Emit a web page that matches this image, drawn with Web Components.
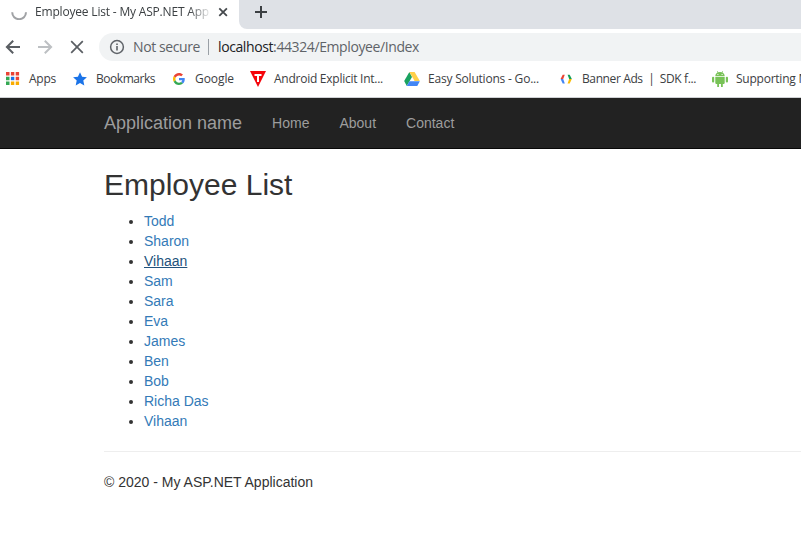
<!DOCTYPE html>
<html lang="en">
<head>
<meta charset="utf-8">
<title>Employee List - My ASP.NET Application</title>
<style>
html,body{margin:0;height:100%;overflow:hidden;background:#fff}
body{display:flex;flex-direction:column}
</style>
</head>
<body>
<browser-chrome></browser-chrome>
<site-navbar></site-navbar>
<employee-page></employee-page>
<script>
const define = (name, html, setup) => customElements.define(name, class extends HTMLElement {
  connectedCallback() {
    if (this.shadowRoot) return;
    const t = document.createElement('template');
    t.innerHTML = html;
    this.attachShadow({mode: 'open'}).append(t.content.cloneNode(true));
    if (setup) setup(this, this.shadowRoot);
  }
});

// Label whose letter spacing is adjusted so the text spans the "span" attribute in pixels.
define('fit-label', `<style>:host{display:block;flex:none;white-space:pre}span{display:inline-block}</style><span><slot></slot></span>`, (el, root) => {
  const s = root.querySelector('span');
  const want = +el.getAttribute('span');
  if (want) {
    const n = el.textContent.length;
    s.style.letterSpacing = (want - s.getBoundingClientRect().width) / n + 'px';
    el.style.width = want + 'px';
  }
});

define('bookmark-item', `<style>
:host{display:flex;flex:none;align-items:center;height:24px}
.icon{display:flex;align-items:center;justify-content:center;width:16px;height:16px;margin-right:var(--gap,8px)}
</style><span class="icon"><slot name="icon"></slot></span><slot></slot>`);

define('tab-strip', `<style>
:host{display:flex;height:29px;background:#fff;font:12px/16px "Open Sans","Noto Sans",sans-serif;color:#3c4043}
.tab{display:flex;width:239px;flex:none;box-sizing:border-box;padding:4px 0 9px 11px}
.title{width:174px;margin-left:8px;overflow:hidden;-webkit-mask-image:linear-gradient(90deg,#000 154px,transparent 177px);mask-image:linear-gradient(90deg,#000 154px,transparent 177px)}
.close{margin-left:7px}
svg{display:block;flex:none}
.rest{flex:1;background:#dee1e6;border-bottom-left-radius:8px;padding:4px 0 0 14px}
</style>
<div class="tab">
<svg width="16" height="16" viewBox="0 0 16 16"><path d="M1.2 8.300A6.900 6.900 0 0 0 15 8.300" fill="none" stroke="#a0a2a5" stroke-width="2"/></svg>
<div class="title"><fit-label span="174">Employee List - My ASP.NET App</fit-label></div>
<svg class="close" width="16" height="16" viewBox="0 0 16 16"><path d="M3.300 4.300l7.600 7.600M10.900 4.300l-7.600 7.600" stroke="#45494d" stroke-width="1.800"/></svg>
</div>
<div class="rest"><svg width="16" height="16" viewBox="0 0 16 16"><path d="M2 8h12M8 2v12" stroke="#3c4043" stroke-width="2"/></svg></div>`);

define('address-bar', `<style>
:host{display:flex;align-items:center;height:36px;font:14px/20px "Open Sans","Noto Sans",sans-serif;color:#5f6368}
svg{display:block;flex:none}
.nav{display:flex;width:99px;flex:none;gap:16px;padding-left:5px;box-sizing:border-box}
.pill{flex:1;height:28px;display:flex;align-items:center;background:#f1f3f4;border-radius:14px 0 0 14px;padding-left:10px}
.sep{width:1px;height:16px;background:#9aa0a6;margin:0 9px 0 8px;flex:none}
.host{color:#202124}
</style>
<div class="nav">
<svg width="16" height="16" viewBox="0 0 16 16"><path d="M15 8H2M8.200 1.700L1.900 8l6.300 6.300" fill="none" stroke="#5a5e63" stroke-width="2"/></svg>
<svg width="16" height="16" viewBox="0 0 16 16"><path d="M1 8h13M7.800 1.700L14.100 8l-6.300 6.300" fill="none" stroke="#bdc0c3" stroke-width="2"/></svg>
<svg width="16" height="16" viewBox="0 0 16 16"><path d="M2.200 2.200l11.600 11.600M13.800 2.200L2.200 13.800" stroke="#5a5e63" stroke-width="1.700"/></svg>
</div>
<div class="pill">
<svg width="16" height="16" viewBox="0 0 16 16"><circle cx="8" cy="8" r="6.400" fill="none" stroke="#5f6368" stroke-width="1.500"/><path d="M8 7v4.600M8 4.400v1.700" stroke="#5f6368" stroke-width="1.600"/></svg>
<fit-label span="67" style="margin-left:8px">Not secure</fit-label><span class="sep"></span>
<fit-label span="201"><span class="host">localhost</span>:44324/Employee/Index</fit-label>
</div>`);

define('bookmarks-bar', `<style>
:host{display:flex;align-items:center;box-sizing:border-box;height:33px;padding:0 0 4px 4px;border-bottom:1px solid #cfd1d4;overflow:hidden;font:12px/16px "Open Sans","Noto Sans",sans-serif;color:#3c4043}
svg{display:block}
</style>
<bookmark-item style="--gap:9px"><svg slot="icon" width="16" height="16" viewBox="0 0 16 16"><path fill="#ea4335" d="M2 1h3.500v3.500H2zM6.900 1h3.400v3.500H6.900zM11.700 1h3.400v3.500h-3.400z"/><path fill="#34a853" d="M2 5.800h3.500v3.400H2zM2 10.600h3.500V14H2z"/><path fill="#1a73e8" d="M6.900 5.800h3.400v3.400H6.900z"/><path fill="#ea4335" d="M11.700 5.800h3.400v3.400h-3.400z"/><path fill="#f9ab00" d="M6.900 10.600h3.400V14H6.900zM11.700 10.600h3.400V14h-3.400z"/></svg><fit-label span="27">Apps</fit-label></bookmark-item>
<bookmark-item style="margin-left:16px"><svg slot="icon" width="16" height="16" viewBox="0 0 16 16"><path fill="#1a73e8" d="M8 1.200l2.100 4.500 4.800.5-3.600 3.300 1 5L8 12.100l-4.300 2.400 1-5L1.100 6.200l4.800-.5z"/></svg><fit-label span="59">Bookmarks</fit-label></bookmark-item>
<bookmark-item style="margin-left:16px"><svg slot="icon" width="12" height="12" viewBox="0 0 48 48"><path fill="#ea4335" d="M24 9.500c3.500 0 6.600 1.200 9.100 3.600l6.800-6.800C35.900 2.400 30.500 0 24 0 14.600 0 6.500 5.400 2.600 13.200l7.900 6.200C12.400 13.700 17.700 9.500 24 9.500z"/><path fill="#4285f4" d="M47 24.500c0-1.600-.2-3.100-.4-4.500H24v9h13c-.6 3-2.300 5.500-4.800 7.200l7.700 6C44.400 38 47 32 47 24.500z"/><path fill="#fbbc05" d="M10.500 28.600a14 14 0 0 1 0-9.200l-7.900-6.200a24 24 0 0 0 0 21.600z"/><path fill="#34a853" d="M24 48c6.500 0 11.900-2.100 15.900-5.800l-7.700-6c-2.200 1.500-4.900 2.300-8.200 2.300-6.300 0-11.600-4.200-13.500-9.900l-7.900 6.200C6.500 42.600 14.600 48 24 48z"/></svg><fit-label span="39">Google</fit-label></bookmark-item>
<bookmark-item style="margin-left:16px"><svg slot="icon" width="16" height="16" viewBox="0 0 16 16"><path fill="#f5050b" d="M0 0h16L8 16z"/><path fill="#fff" d="M4.500 3h7v2H9v6H7V5H4.500z"/></svg><fit-label span="109">Android Explicit Int...</fit-label></bookmark-item>
<bookmark-item style="margin-left:21px"><svg slot="icon" width="16" height="14" viewBox="0 0 87.300 78"><path fill="#1aa260" d="M29 0L0 50.500 14.500 78l29.200-50.500z"/><path fill="#ffcf48" d="M29 0h29.300l29 50.500H58z"/><path fill="#4285f4" d="M29.200 52h58.100L73 78H14.500z"/></svg><fit-label span="111">Easy Solutions - Go...</fit-label></bookmark-item>
<bookmark-item style="margin-left:19px"><svg slot="icon" width="16" height="16" viewBox="0 0 16 16"><path fill="#ea4335" d="M4.700 3.700h2.100L5.200 8H2.600z"/><path fill="#4285f4" d="M2.600 8h2.600l1.600 4.400H4.700z"/><path fill="#109d58" d="M9.600 3.700h2.100L13.800 8h-2.600z"/><path fill="#fbbc05" d="M11.200 8h2.600l-2.100 4.400H9.600z"/></svg><fit-label span="114">Banner Ads  |  SDK f...</fit-label></bookmark-item>
<bookmark-item style="margin-left:16px"><svg slot="icon" width="16" height="16" viewBox="0 0 16 16" fill="#78c257"><path d="M3.300 5.200C3.400 3 4.600 2 5.600 1.500L4.900.4l.5-.3.8 1.100a6 6 0 0 1 3.600 0l.8-1.100.5.3-.7 1.100c1 .5 2.200 1.500 2.300 3.700z"/><path d="M3.300 5.900h9.400v6.200q0 .8-.8.8h-1.100v3.100H9v-3.100H7V16H5.200v-3.100H4.100q-.8 0-.8-.8z"/><rect y="5.800" width="2.200" height="5.600" rx="1"/><rect x="13.800" y="5.800" width="2.200" height="5.600" rx="1"/><path fill="#fff" d="M5.400 3h1v1h-1zM9.600 3h1v1h-1z"/></svg><fit-label span="73">Supporting M</fit-label></bookmark-item>`);

define('browser-chrome', `<style>:host{display:flex;flex-direction:column;height:98px;flex:none}</style>
<tab-strip></tab-strip><address-bar></address-bar><bookmarks-bar></bookmarks-bar>`);

define('site-navbar', `<style>
:host{display:flex;flex:none;height:50px;background:#222;border-bottom:1px solid #080808;font:14px/20px "Liberation Sans",Arial,sans-serif;padding-left:89px}
a{padding:15px;color:#9d9d9d}
.brand{font-size:18px}
</style><a class="brand">Application name</a><a>Home</a><a>About</a><a>Contact</a>`);

define('employee-list', `<style>
:host{display:block}ul{margin:0 0 10px;padding-left:40px}a{color:#337ab7}
a.hover{color:#23527c;text-decoration:underline}
</style><ul></ul>`, (el, root) => {
  const ul = root.querySelector('ul');
  ['Todd','Sharon','Vihaan','Sam','Sara','Eva','James','Ben','Bob','Richa Das','Vihaan'].forEach((n, i) => {
    const li = document.createElement('li'), a = document.createElement('a');
    a.textContent = n;
    if (i === 2) a.className = 'hover';
    li.append(a);
    ul.append(li);
  });
});

define('employee-page', `<style>
:host{display:block;padding:19px 0 0 104px;font:14px/20px "Liberation Sans",Arial,sans-serif;color:#333}
h2{margin:0 0 10px;font-size:30px;line-height:33px;font-weight:400}
hr{margin:20px 0;border:0;border-top:1px solid #eee}
p{margin:0}
</style><h2>Employee List</h2><employee-list></employee-list><hr><p>© 2020 - My ASP.NET Application</p>`);
</script>
</body>
</html>
